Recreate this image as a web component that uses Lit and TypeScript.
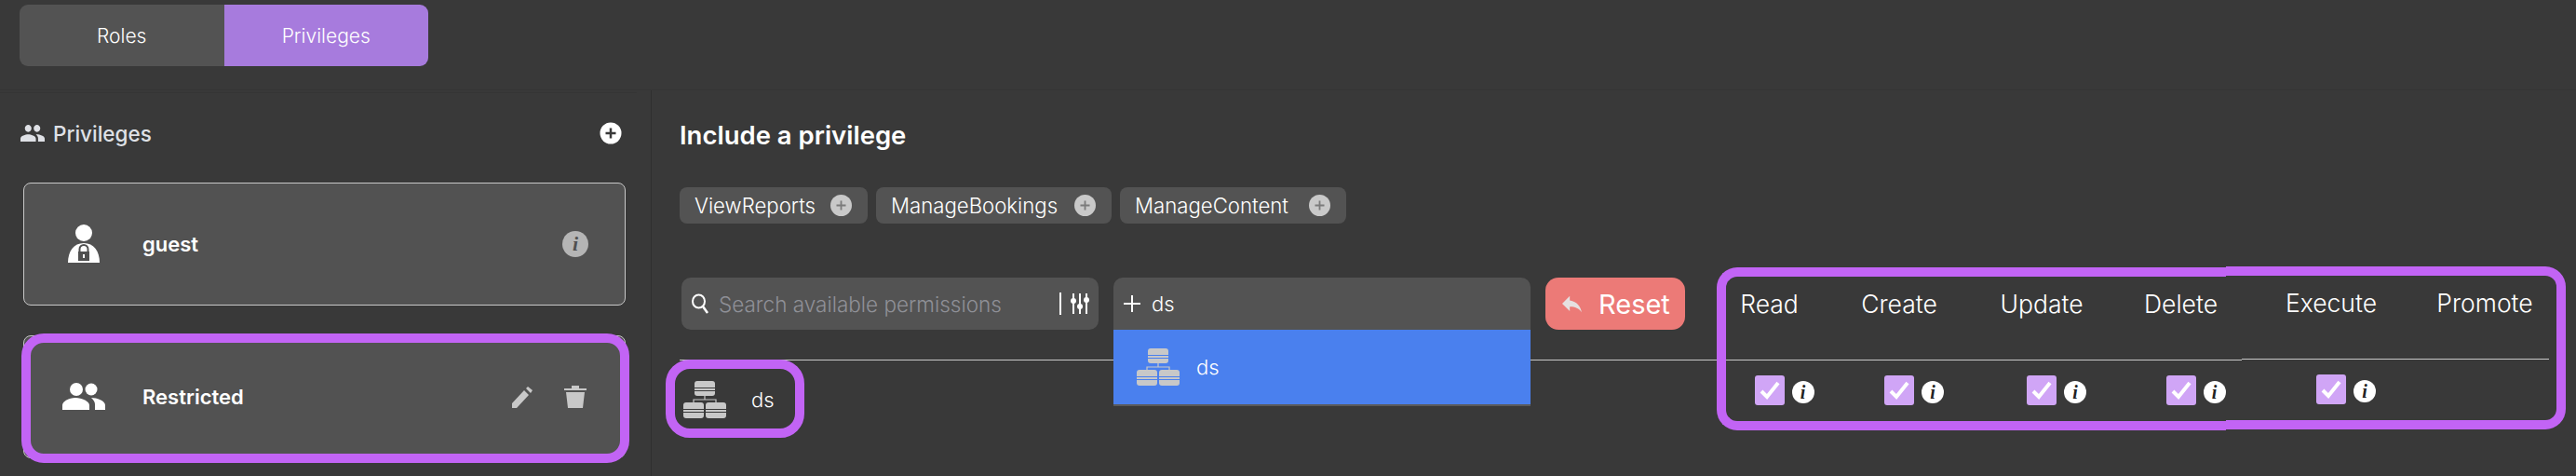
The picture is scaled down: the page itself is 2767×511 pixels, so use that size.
import {LitElement, html, css, svg} from 'lit';
import {customElement} from 'lit/decorators.js';

const serverIcon = svg`
    <rect x="12" y="0" width="22" height="16" rx="3"/>
    <rect x="0" y="23" width="22" height="17" rx="3"/>
    <rect x="24" y="23" width="22" height="17" rx="3"/>
    <path d="M23 16v4M11 23v-3h24v3" fill="none" stroke="currentColor" stroke-width="1.2"/>
    <path d="M12 7.5h22M12 10.5h22M0 30.500h22M0 33.500h22M24 30.500h22M24 33.500h22" stroke="var(--stripe)" stroke-width="1"/>
`;

const plusIcon = html`<svg class="chip-plus" viewBox="0 0 23 23"><circle cx="11.500" cy="11.500" r="11.500" fill="#c9c9c9"/><path d="M11.500 6.500v10M6.500 11.500h10" stroke="#7b7b7b" stroke-width="1.800"/></svg>`;

@customElement('app-root')
export class AppRoot extends LitElement {
    static styles = css`
        :host {
            display: block;
            width: 2767px;
            height: 511px;
            overflow: hidden;
            background: #393939;
            color: #fff;
            font-family: Inter, "Noto Sans", sans-serif;
            font-size: 22px;
            font-weight: 300;
        }

        .topbar {
            height: 96px;
            box-sizing: border-box;
            padding: 5px 0 0 21px;
        }

        .tabs {
            display: flex;
            width: 439px;
            height: 66px;
            border-radius: 9px;
            overflow: hidden;
            font-size: 21px;
        }

        .tab {
            display: flex;
            align-items: center;
            justify-content: center;
            width: 50%;
            background: #535353;
        }

        .tab.active {
            background: #a77bdd;
        }

        .page {
            display: flex;
            height: 415px;
            border-top: 1px solid #353535;
            box-sizing: border-box;
        }

        .sidebar {
            width: 700px;
            flex: none;
            box-sizing: border-box;
            border-right: 1px solid #2f2f2f;
            padding-top: 2px;
        }

        .side-head {
            display: flex;
            align-items: center;
            width: 684px;
            height: 87px;
            box-sizing: border-box;
            border-top: 1px solid #353535;
            padding: 0 16px 0 22px;
            color: #dfe1e6;
            font-size: 22.5px;
            font-weight: 500;
            gap: 9px;
        }

        .side-head .label {
            flex: 1;
        }

        .side-head svg {
            width: 26px;
            height: 18px;
        }

        .side-head svg.add {
            width: 24px;
            height: 24px;
        }

        .cards {
            display: flex;
            flex-direction: column;
            gap: 32px;
            margin: 10px 0 0 25px;
            width: 647px;
        }

        .card {
            position: relative;
            display: flex;
            align-items: center;
            height: 132px;
            box-sizing: border-box;
            border: 1px solid #c8c8c8;
            border-radius: 8px;
            background: #525252;
            font-weight: 600;
        }

        .card .badge {
            width: 127px;
            flex: none;
            display: flex;
            justify-content: center;
        }

        .card .name {
            flex: 1;
        }

        .card .actions {
            display: flex;
            align-items: center;
            gap: 34px;
            padding-right: 41px;
        }

        .card.guest .actions {
            padding-right: 39px;
        }

        .card .actions svg {
            display: block;
        }

        .outline {
            position: absolute;
            box-sizing: border-box;
            border: 10px solid #c264f5;
            pointer-events: none;
        }

        .card .outline {
            top: -3px;
            bottom: -6px;
            left: -3px;
            right: -5px;
            border-radius: 24px;
        }

        .main {
            flex: 1;
            padding-left: 30px;
            min-width: 0;
        }

        .title {
            margin-top: 33px;
            height: 30px;
            line-height: 30px;
            font-size: 27.5px;
            font-weight: 600;
        }

        .chips {
            display: grid;
            grid-template-columns: 202px 253px 243px;
            gap: 9px;
            margin-top: 41px;
        }

        .chip {
            display: flex;
            align-items: center;
            justify-content: space-between;
            height: 39px;
            padding: 0 17px 0 16px;
            border-radius: 8px;
            background: #535353;
            font-size: 22.2px;
        }

        .chip-plus {
            width: 23px;
            height: 23px;
        }

        .table {
            position: relative;
            display: grid;
            grid-template-columns: 1100px 141px 138px 168px 131px 192px 138px;
            width: 2016px;
            margin-top: 58px;
        }

        .head {
            height: 89px;
            box-sizing: border-box;
            border-bottom: 1px solid #c8c8c8;
        }

        .col-name {
            display: flex;
            justify-content: center;
            align-items: center;
            height: 56px;
            font-size: 26.5px;
        }

        .shifted {
            transform: translateY(-1px);
        }

        .toolbar {
            display: flex;
            gap: 16px;
            padding-left: 2px;
        }

        .field {
            position: relative;
            display: flex;
            align-items: center;
            width: 448px;
            height: 56px;
            box-sizing: border-box;
            border-radius: 10px;
            background: #535353;
        }

        .search {
            padding: 0 10px 0 11px;
            color: #8f9097;
        }

        .search .placeholder {
            flex: 1;
            margin-left: 11px;
            font-size: 22.5px;
        }

        .search .sep {
            width: 2px;
            height: 24px;
            background: #fff;
            margin-right: 10px;
        }

        .combo {
            padding-left: 11px;
            gap: 12px;
            border-radius: 10px 10px 0 0;
        }

        .menu {
            position: absolute;
            top: 56px;
            left: 0;
            right: 0;
            height: 82px;
            box-sizing: border-box;
            display: flex;
            align-items: center;
            gap: 18px;
            padding-left: 25px;
            background: #4a80ee;
            border-bottom: 2px solid #5a5a5a;
            z-index: 1;
            --stripe: #4a80ee;
        }

        .reset {
            display: flex;
            align-items: center;
            gap: 18px;
            width: 150px;
            height: 56px;
            box-sizing: border-box;
            padding-left: 18px;
            border-radius: 14px;
            background: #ec7a77;
            font-size: 29px;
            font-weight: 400;
        }

        .server {
            width: 46px;
            height: 40px;
            flex: none;
            color: #c8c8c8;
            fill: #c8c8c8;
        }

        .row-name {
            position: relative;
            display: flex;
            align-items: center;
            gap: 27px;
            height: 82px;
            box-sizing: border-box;
            padding: 2px 0 0 4px;
            --stripe: #393939;
        }

        .row-name .outline {
            top: -1px;
            left: -15px;
            width: 149px;
            height: 84px;
            border-radius: 26px;
        }

        .cell {
            display: flex;
            justify-content: center;
            padding-top: 16px;
        }

        .check {
            position: relative;
            width: 32px;
            height: 32px;
            border-radius: 3px;
            background: #d0a5f6;
        }

        .check svg {
            display: block;
        }

        .info {
            position: absolute;
            left: 40px;
            top: 6px;
            width: 24px;
            height: 24px;
            border-radius: 50%;
            background: #fff;
            color: #222;
            display: flex;
            align-items: center;
            justify-content: center;
            font: italic 700 20px "Liberation Serif", serif;
        }

        .info-lg {
            display: flex;
            align-items: center;
            justify-content: center;
            width: 28px;
            height: 28px;
            border-radius: 50%;
            background: #b5b5b5;
            color: #505050;
            font: italic 700 22px "Liberation Serif", serif;
        }

        .frame-left {
            top: -11px;
            left: 1114px;
            width: 547px;
            height: 175px;
            border-right: none;
            border-radius: 22px 0 0 22px;
        }

        .frame-right {
            top: -12px;
            left: 1661px;
            width: 365px;
            height: 175px;
            border-left: none;
            border-radius: 0 22px 22px 0;
        }
    `;

    renderCheck(shifted = false) {
        return html`<div class="cell ${shifted ? 'shifted' : ''}">
            <div class="check">
                <svg width="32" height="32" viewBox="0 0 32 32"><path d="M7 17l6 6L25 8" fill="none" stroke="#fff" stroke-width="4"/></svg>
                <span class="info">i</span>
            </div>
        </div>`;
    }

    render() {
        return html`
        <div class="topbar">
            <div class="tabs">
                <div class="tab">Roles</div>
                <div class="tab active">Privileges</div>
            </div>
        </div>
        <div class="page">
            <div class="sidebar">
                <div class="side-head">
                    <svg viewBox="1 5 22 14" preserveAspectRatio="none"><path fill="#dfe1e6" d="M16 11c1.660 0 2.990-1.340 2.990-3S17.660 5 16 5c-1.660 0-3 1.340-3 3s1.340 3 3 3zm-8 0c1.660 0 2.990-1.340 2.990-3S9.660 5 8 5C6.340 5 5 6.340 5 8s1.340 3 3 3zm0 2c-2.330 0-7 1.170-7 3.500V19h14v-2.500c0-2.330-4.670-3.500-7-3.500zm8 0c-.290 0-.620.020-.970.050 1.160.840 1.970 1.970 1.970 3.450V19h6v-2.500c0-2.330-4.670-3.500-7-3.500z"/></svg>
                    <span class="label">Privileges</span>
                    <svg class="add" viewBox="0 0 24 24"><circle cx="12" cy="12" r="11.500" fill="#fff"/><path d="M12 6.500v11M6.500 12h11" stroke="#393939" stroke-width="2.500"/></svg>
                </div>
                <div class="cards">
                    <div class="card guest">
                        <div class="badge">
                            <svg width="36" height="42" viewBox="0 0 36 42">
                                <ellipse cx="18" cy="9" rx="9" ry="9" fill="#fff"/>
                                <path d="M1 41c0-12 6-21 17-21s17 9 17 21z" fill="#fff"/>
                                <path d="M13.500 30v-3.500a4.500 4.500 0 0 1 9 0V30" fill="none" stroke="#505050" stroke-width="2"/>
                                <rect x="12" y="29" width="12" height="10" fill="#505050"/>
                                <rect x="17" y="32" width="2" height="4" fill="#fff"/>
                            </svg>
                        </div>
                        <div class="name">guest</div>
                        <div class="actions"><span class="info-lg">i</span></div>
                    </div>
                    <div class="card">
                        <div class="badge">
                            <svg width="46" height="30" viewBox="0 0 46 30">
                                <circle cx="15" cy="7" r="7" fill="#fff"/>
                                <circle cx="31" cy="7" r="6.500" fill="#fff"/>
                                <path d="M0 29v-5c0-4 7-8 14-8s15 4 15 8v5z" fill="#fff"/>
                                <path d="M31 16c6 0 15 3 15 8v5H35v-6c0-3-2-5-4-7z" fill="#fff"/>
                            </svg>
                        </div>
                        <div class="name">Restricted</div>
                        <div class="actions">
                            <svg width="22" height="23" viewBox="0 0 22 23"><path d="M0 23v-5L13 4l5 5L5 23zM15 2l2-2 5 4-2 3z" fill="#c8c8c8"/></svg>
                            <svg width="24" height="24" viewBox="0 0 24 24"><path d="M8 3V0h8v3h8v2H0V3zM2 7h20l-2 17H4z" fill="#c8c8c8"/></svg>
                        </div>
                        <div class="outline"></div>
                    </div>
                </div>
            </div>
            <div class="main">
                <div class="title">Include a privilege</div>
                <div class="chips">
                    <div class="chip">ViewReports${plusIcon}</div>
                    <div class="chip">ManageBookings${plusIcon}</div>
                    <div class="chip">ManageContent${plusIcon}</div>
                </div>
                <div class="table">
                    <div class="head toolbar">
                        <div class="field search">
                            <svg width="18" height="22" viewBox="0 0 18 22"><ellipse cx="7.500" cy="8.500" rx="6.500" ry="7" fill="none" stroke="#fff" stroke-width="2"/><path d="M12 14l5 7" stroke="#fff" stroke-width="2.500"/></svg>
                            <span class="placeholder">Search available permissions</span>
                            <span class="sep"></span>
                            <svg width="20" height="22" viewBox="0 0 20 22">
                                <path d="M3 0v22M10 0v22M17 0v22" stroke="#fff" stroke-width="2"/>
                                <circle cx="3" cy="8" r="3" fill="#fff"/><circle cx="10" cy="14" r="3" fill="#fff"/><circle cx="17" cy="7" r="3" fill="#fff"/>
                            </svg>
                        </div>
                        <div class="field combo">
                            <svg width="18" height="18" viewBox="0 0 18 18"><path d="M9 0v18M0 9h18" stroke="#fff" stroke-width="2"/></svg>
                            <span>ds</span>
                            <div class="menu">
                                <svg class="server" viewBox="0 0 46 40">${serverIcon}</svg>
                                <span>ds</span>
                            </div>
                        </div>
                        <div class="reset">
                            <svg width="21" height="19" viewBox="3 5 18 15"><path fill="#e6e0e0" d="M10 9V5l-7 7 7 7v-4.100c5 0 8.500 1.600 11 5.100-1-5-4-10-11-11z"/></svg>
                            <span>Reset</span>
                        </div>
                    </div>
                    <div class="head"><div class="col-name">Read</div></div>
                    <div class="head"><div class="col-name">Create</div></div>
                    <div class="head"><div class="col-name">Update</div></div>
                    <div class="head"><div class="col-name">Delete</div></div>
                    <div class="head shifted"><div class="col-name">Execute</div></div>
                    <div class="head shifted"><div class="col-name">Promote</div></div>

                    <div class="row-name">
                        <svg class="server" viewBox="0 0 46 40">${serverIcon}</svg>
                        <span>ds</span>
                        <div class="outline"></div>
                    </div>
                    ${this.renderCheck()}
                    ${this.renderCheck()}
                    ${this.renderCheck()}
                    ${this.renderCheck()}
                    ${this.renderCheck(true)}
                    <div></div>

                    <div class="outline frame-left"></div>
                    <div class="outline frame-right"></div>
                </div>
            </div>
        </div>
        `;
    }
}
